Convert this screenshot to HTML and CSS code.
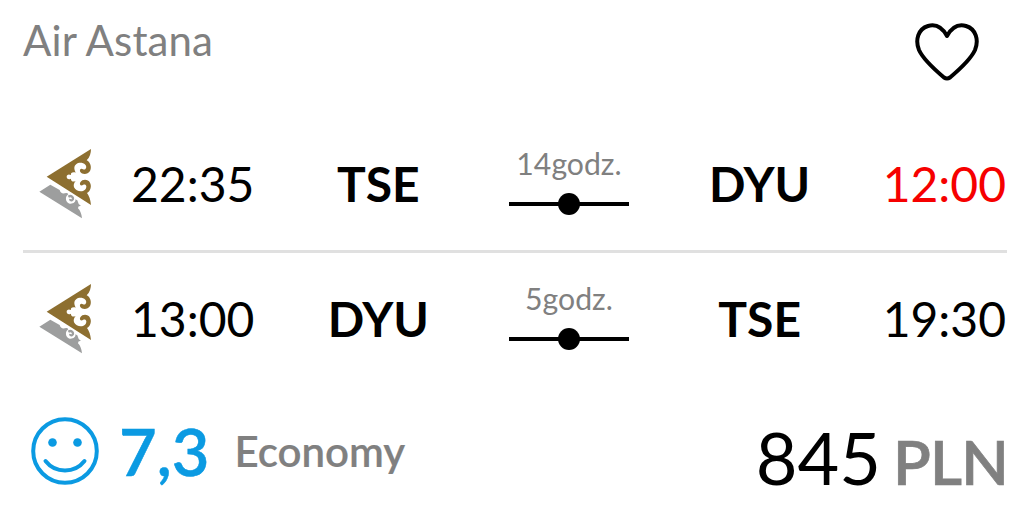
FILE: index.html
```html
<!DOCTYPE html>
<html lang="pl">
<head>
    <meta charset="UTF-8">
    <meta name="viewport" content="width=device-width, initial-scale=1.0">
    <title>Air Astana</title>
    <link rel="stylesheet" href="styles.css">
</head>
<body>
    <!-- Shared airline logo -->
    <svg class="symbols" width="0" height="0">
        <symbol id="logo" viewBox="54 39 168 216">
            <path fill="#8d6f30" d="M80 125 L213 42 Q213 64 200 76 C211 81 216 97 210 108 C203 120 186 119 181 111 C177 104 183 98 189 103 C197 106 202 96 196 89 C185 79 163 83 163 100 Q163 107 167 113 C157 110 151 115 153 120 C145 116 140 120 140 125 C140 131 145 135 153 131 C152 138 159 142 167 138 Q159 146 162 157 C169 171 189 173 197 162 C203 152 195 146 189 150 C183 154 177 149 181 142 C187 132 204 132 210 143 C216 154 211 168 201 174 Q211 187 213 210 Z"/>
            <path fill="#9d9e9e" d="M58 170 L91 149 L119 165 Q122 177 134 175 Q142 172 145 178 C134 184 136 203 149 206 C160 207 168 201 166 193 L172 196 Q174 208 183 213 Q174 211 174 220 Q184 230 186 250 Z"/>
            <path fill="none" stroke="#9d9e9e" stroke-width="7" d="M145 185 Q153 180 158 187 Q161 194 155 196 Q150 196 151 192"/>
        </symbol>
    </svg>

    <div class="card">
        <header class="card-header">
            <span class="airline">Air Astana</span>
            <svg class="heart" viewBox="0 0 66 60">
                <path d="M33 14 C28 5 21 2 14 4 C4 7 1 18 5 28 C9 37 20 47 30 55.5 Q33 57.5 36 55.5 C46 47 57 37 61 28 C65 18 62 7 52 4 C45 2 38 5 33 14 Z"/>
            </svg>
        </header>

        <div class="flight">
            <svg class="logo"><use href="#logo"/></svg>
            <span class="time">22:35</span>
            <span class="airport">TSE</span>
            <div class="route">
                <span class="duration">14godz.</span>
                <div class="line"><i class="stop"></i></div>
            </div>
            <span class="airport">DYU</span>
            <span class="time arrival late">12:00</span>
        </div>
        <div class="flight">
            <svg class="logo"><use href="#logo"/></svg>
            <span class="time">13:00</span>
            <span class="airport">DYU</span>
            <div class="route">
                <span class="duration">5godz.</span>
                <div class="line"><i class="stop"></i></div>
            </div>
            <span class="airport">TSE</span>
            <span class="time arrival">19:30</span>
        </div>

        <footer class="card-footer">
            <svg class="smile" viewBox="0 0 68 68">
                <circle cx="34" cy="34" r="31.8"/>
                <path d="M14.5 44 Q22 53.5 34 53.5 Q46 53.5 53.5 44"/>
                <circle class="eye" cx="21.5" cy="25.5" r="4.3"/>
                <circle class="eye" cx="46.5" cy="25.5" r="4.3"/>
            </svg>
            <span class="score">7,3</span>
            <span class="cabin">Economy</span>
            <div class="total">
                <span class="price">845</span>
                <span class="currency">PLN</span>
            </div>
        </footer>
    </div>
</body>
</html>
```

FILE: styles.css
```css
* {
    margin: 0;
    padding: 0;
    box-sizing: border-box;
}

body {
    font-family: 'Lato', sans-serif;
    background: #fff;
    color: #000;
    overflow: hidden;
}

.symbols {
    display: block;
}

.card {
    height: 510px;
    padding: 0 15px 0 23px;
}

.card-header {
    height: 118px;
    display: flex;
    justify-content: space-between;
    align-items: flex-start;
    padding: 15px 27px 0 0;
}

.airline {
    font-size: 42px;
    line-height: 50px;
    letter-spacing: 0.1px;
    color: #808080;
}

.heart {
    width: 66px;
    height: 60px;
    margin-top: 7px;
    fill: none;
    stroke: #000;
    stroke-width: 4;
    stroke-linejoin: round;
}

.flight {
    display: grid;
    grid-template-columns: 108px 152px repeat(3, 1fr) 151px;
    align-items: center;
    height: 132px;
    padding-right: 1px;
    font-size: 48px;
    line-height: 58px;
}

.flight + .flight {
    height: 135px;
    border-top: 3px solid #e0e0e0;
}

.logo {
    width: 56px;
    height: 72px;
    margin-left: 15px;
}

.airport {
    font-weight: 700;
    text-align: center;
}

.arrival {
    text-align: right;
}

.late {
    color: #f60000;
}

.route {
    display: flex;
    flex-direction: column;
    align-items: center;
    padding-bottom: 10px;
}

.duration {
    font-size: 30.2px;
    line-height: 38px;
    color: #808080;
}

.line {
    width: 120px;
    height: 22px;
    display: flex;
    align-items: center;
    justify-content: center;
    margin-top: 11px;
    background: linear-gradient(#000, #000) center / 100% 4px no-repeat;
}

.stop {
    width: 22px;
    height: 22px;
    border-radius: 50%;
    background: #000;
}

.card-footer {
    height: 125px;
    display: flex;
    align-items: flex-start;
}

.smile {
    width: 68px;
    height: 68px;
    margin: 32px 0 0 8px;
    fill: none;
    stroke: #0b9ae2;
    stroke-width: 4;
    stroke-linecap: round;
}

.smile .eye {
    fill: #0b9ae2;
    stroke: none;
}

.score {
    margin: 27px 0 0 20px;
    font-size: 65px;
    font-weight: 600;
    line-height: 78px;
    color: #0b9ae2;
    -webkit-text-stroke: 0.5px #0b9ae2;
}

.cabin {
    margin: 41px 0 0 25px;
    font-size: 42px;
    font-weight: 600;
    line-height: 50px;
    color: #808080;
    -webkit-text-stroke: 0.2px #808080;
}

.total {
    display: flex;
    align-items: baseline;
    margin: -1px -1px 0 auto;
}

.price {
    font-size: 72px;
    line-height: 146px;
}

.currency {
    margin-left: 12px;
    font-size: 62px;
    font-weight: 600;
    letter-spacing: -0.8px;
    color: #808080;
    -webkit-text-stroke: 0.7px #808080;
}
```
